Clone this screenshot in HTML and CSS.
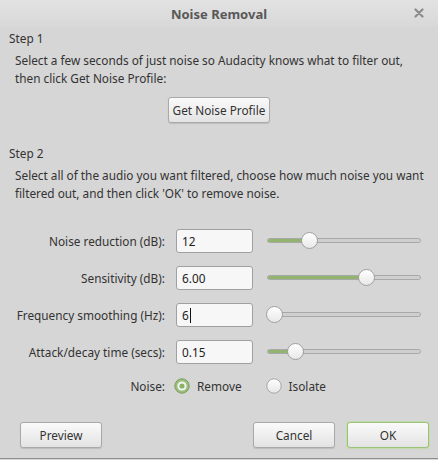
FILE: index.html
```html
<!DOCTYPE html>
<html lang="en">
<head>
    <meta charset="UTF-8">
    <meta name="viewport" content="width=device-width, initial-scale=1.0">
    <link rel="stylesheet" href="styles.css">
    <title>Noise Removal</title>
</head>
<body>
    <div class="window">
        <div class="titlebar">
            <span class="title">Noise Removal</span>
            <span class="close">
                <svg width="10" height="10" viewBox="0 0 10 10"><path d="M1.5 1.5 L8.5 8.5 M8.5 1.5 L1.5 8.5" stroke="#8c8c8c" stroke-width="2.2" stroke-linecap="round"/></svg>
            </span>
        </div>

        <div class="content">
            <div class="step-title step-one">Step 1</div>
            <p class="step-text">Select a few seconds of just noise so Audacity knows what to filter out,<br>then click Get Noise Profile:</p>
            <div class="center-row">
                <button class="btn btn-profile">Get Noise Profile</button>
            </div>

            <div class="step-title step-two">Step 2</div>
            <p class="step-text">Select all of the audio you want filtered, choose how much noise you want<br>filtered out, and then click 'OK' to remove noise.</p>

            <div class="settings">
                <label class="field-label">Noise reduction (dB):</label>
                <div class="field">12</div>
                <div class="slider"><div class="slider-fill" style="width: 42px"></div><div class="slider-thumb" style="left: 42px"></div></div>

                <label class="field-label">Sensitivity (dB):</label>
                <div class="field">6.00</div>
                <div class="slider"><div class="slider-fill" style="width: 99px"></div><div class="slider-thumb" style="left: 99px"></div></div>

                <label class="field-label">Frequency smoothing (Hz):</label>
                <div class="field">6<span class="caret"></span></div>
                <div class="slider"><div class="slider-fill" style="width: 7px"></div><div class="slider-thumb" style="left: 7px"></div></div>

                <label class="field-label">Attack/decay time (secs):</label>
                <div class="field">0.15</div>
                <div class="slider"><div class="slider-fill" style="width: 28px"></div><div class="slider-thumb" style="left: 28px"></div></div>

                <label class="field-label">Noise:</label>
                <div class="radios">
                    <span class="radio">
                        <svg width="16" height="16" viewBox="0 0 16 16">
                            <circle cx="8" cy="8" r="7.2" fill="#9dbf7c" stroke="#7a9c5c" stroke-width="1"/>
                            <circle cx="8" cy="8" r="4.6" fill="#f4f4f4"/>
                            <circle cx="8" cy="8" r="2.6" fill="#8ab36a"/>
                        </svg>
                        Remove
                    </span>
                    <span class="radio">
                        <svg width="16" height="16" viewBox="0 0 16 16">
                            <defs>
                                <linearGradient id="rg" x1="0" y1="0" x2="0" y2="1">
                                    <stop offset="0" stop-color="#ffffff"/>
                                    <stop offset="1" stop-color="#e6e6e6"/>
                                </linearGradient>
                            </defs>
                            <circle cx="8" cy="8" r="7.2" fill="url(#rg)" stroke="#a6a6a6" stroke-width="1"/>
                        </svg>
                        Isolate
                    </span>
                </div>
            </div>

            <div class="actions">
                <button class="btn btn-wide">Preview</button>
                <div class="actions-right">
                    <button class="btn btn-wide">Cancel</button>
                    <button class="btn btn-wide btn-default">OK</button>
                </div>
            </div>
        </div>
    </div>
</body>
</html>
```

FILE: styles.css
```css
body {
    margin: 0;
    font-family: 'Noto Sans', 'DejaVu Sans', sans-serif;
    font-size: 11.8px;
    color: #333333;
    background-color: #d6d6d6;
}

.window {
    width: 438px;
    height: 459px;
    background-color: #d6d6d6;
    border-bottom: 1px solid #8e8e8e;
    box-sizing: border-box;
    overflow: hidden;
}

.titlebar {
    height: 27px;
    position: relative;
    display: flex;
    align-items: center;
    justify-content: center;
    background: linear-gradient(#e2e2e2, #d8d8d8);
}

.title {
    font-size: 13px;
    font-weight: bold;
    color: #585858;
}

.close {
    position: absolute;
    right: 14px;
    top: 8px;
    display: flex;
}

.content {
    padding: 0 9px;
}

.step-title {
    line-height: 18px;
}

.step-one {
    margin-top: 2px;
}

.step-two {
    margin-top: 21px;
}

.step-text {
    margin: 4px 0 0 6px;
    line-height: 18px;
    white-space: nowrap;
}

.center-row {
    display: flex;
    justify-content: center;
    margin-top: 10px;
}

.btn {
    font-family: inherit;
    font-size: 11.8px;
    color: #333333;
    height: 26px;
    padding: 0 8px;
    border: 1px solid #a9a9a9;
    border-radius: 3px;
    background: linear-gradient(#fafafa, #e3e3e3);
    box-shadow: 0 1px 1px rgba(0, 0, 0, 0.12);
}

.btn-profile {
    width: 102px;
    padding: 0;
}

.settings {
    display: grid;
    grid-template-columns: 150px 77px 157px;
    grid-template-rows: repeat(4, 37px) 32px;
    column-gap: 11px;
    margin: 20px 0 0 6px;
    align-items: center;
}

.settings .slider {
    margin-left: 3px;
}

.field-label {
    text-align: right;
    white-space: nowrap;
}

.field {
    height: 24px;
    box-sizing: border-box;
    border: 1px solid #a0a0a0;
    border-radius: 3px;
    background-color: #f7f7f7;
    padding: 0 5px;
    line-height: 22px;
    color: #222222;
}

.caret {
    display: inline-block;
    width: 1px;
    height: 15px;
    background-color: #111111;
    vertical-align: -3px;
    margin-left: 1px;
}

.slider {
    position: relative;
    height: 5px;
    box-sizing: border-box;
    border: 1px solid #a8a8a8;
    border-radius: 3px;
    background-color: #cfcfcf;
}

.slider-fill {
    height: 100%;
    border-radius: 3px 0 0 3px;
    background-color: #92b46f;
}

.slider-thumb {
    position: absolute;
    top: -7px;
    width: 17px;
    height: 17px;
    margin-left: -9px;
    box-sizing: border-box;
    border: 1px solid #a0a0a0;
    border-radius: 50%;
    background: linear-gradient(#ffffff, #e8e8e8);
}

.radios {
    grid-column: 2 / span 2;
    display: flex;
    gap: 24px;
    margin-left: -2px;
}

.radio {
    display: flex;
    align-items: center;
    gap: 7px;
}

.actions {
    display: flex;
    justify-content: space-between;
    margin: 20px 0 0 11px;
}

.actions-right {
    display: flex;
    gap: 12px;
}

.btn-wide {
    width: 82px;
}

.btn-default {
    border-color: #9cc27a;
    box-shadow: 0 0 0 1px #c4dcac, 0 1px 1px rgba(0, 0, 0, 0.12);
}
```
